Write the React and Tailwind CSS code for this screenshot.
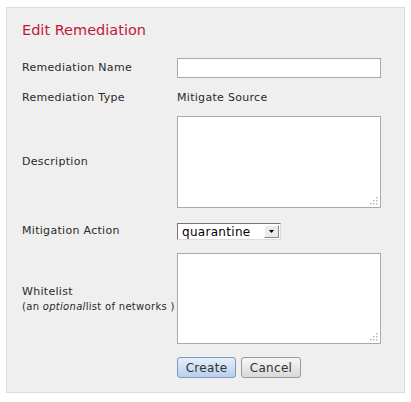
function Grip() {
  return (
    <svg className="absolute right-[2px] bottom-[2px]" width="9" height="9" viewBox="0 0 9 9">
      {[[7, 1], [4, 4], [7, 4], [1, 7], [4, 7], [7, 7]].map(([x, y]) => (
        <rect key={x + '-' + y} x={x} y={y} width="1.5" height="1.5" fill="#b8b8b8" />
      ))}
    </svg>
  );
}

function Area() {
  return (
    <div className="relative w-[204px] h-full bg-white border border-[#a9a9a9]">
      <textarea className="w-full h-full resize-none outline-none bg-transparent" />
      <Grip />
    </div>
  );
}

export default function App() {
  const label = 'w-[155px] shrink-0 text-[11px] text-[#2a2a2a] tracking-[0.3px]';
  return (
    <div className="w-[411px] h-[402px] bg-white font-['DejaVu_Sans',Verdana,sans-serif] pt-[7px] pl-[6px]">
      <div className="w-[399px] h-[386px] bg-[#efefef] border border-[#dcdcdc] pl-[15px] flex flex-col">
        <div className="h-[30px] mt-[8px] mb-[3px] flex items-center text-[14.5px] text-[#c4163c]">
          Edit Remediation
        </div>

        <div className="mt-[9px] h-[20px] flex items-center">
          <div className={label}>Remediation Name</div>
          <input className="w-[204px] h-[20px] bg-white border border-[#a9a9a9] outline-none" />
        </div>

        <div className="mt-[10px] h-[20px] flex items-center">
          <div className={label}>Remediation Type</div>
          <div className="text-[11px] text-[#2a2a2a] tracking-[0.3px]">Mitigate Source</div>
        </div>

        <div className="mt-[8px] h-[92px] flex items-center">
          <div className={label}>Description</div>
          <Area />
        </div>

        <div className="mt-[15px] h-[17px] flex items-center">
          <div className={label}>Mitigation Action</div>
          <div className="w-[104px] h-[17px] bg-white border border-[#777] border-r-[#ddd] border-b-[#ddd] flex items-center">
            <span className="flex-1 pl-[4px] text-[12px] text-black leading-none tracking-[0.3px]">quarantine</span>
            <span className="w-[15px] h-[13px] mr-[1px] bg-[#ebebeb] border border-[#fff] border-r-[#888] border-b-[#888] flex items-center justify-center">
              <svg width="5" height="3" viewBox="0 0 5 3">
                <path d="M0 0h5L2.5 3z" fill="#000" />
              </svg>
            </span>
          </div>
        </div>

        <div className="mt-[13px] h-[91px] flex items-center">
          <div className={label}>
            <div className="leading-[15px]">Whitelist</div>
            <div className="text-[10px] leading-[15px]">
              (an <i>optional</i>list of networks )
            </div>
          </div>
          <Area />
        </div>

        <div className="mt-[13px] flex gap-[5px] pl-[155px]">
          <button className="w-[59px] h-[21px] rounded-[3px] border border-[#7f9ab8] bg-gradient-to-b from-[#e6effa] to-[#b7cfec] text-[12px] text-[#333] tracking-[0.3px]">
            Create
          </button>
          <button className="w-[60px] h-[21px] rounded-[3px] border border-[#9a9a9a] bg-gradient-to-b from-[#f7f7f7] to-[#d9d9d9] text-[12px] text-[#333] tracking-[0.3px]">
            Cancel
          </button>
        </div>
      </div>
    </div>
  );
}
